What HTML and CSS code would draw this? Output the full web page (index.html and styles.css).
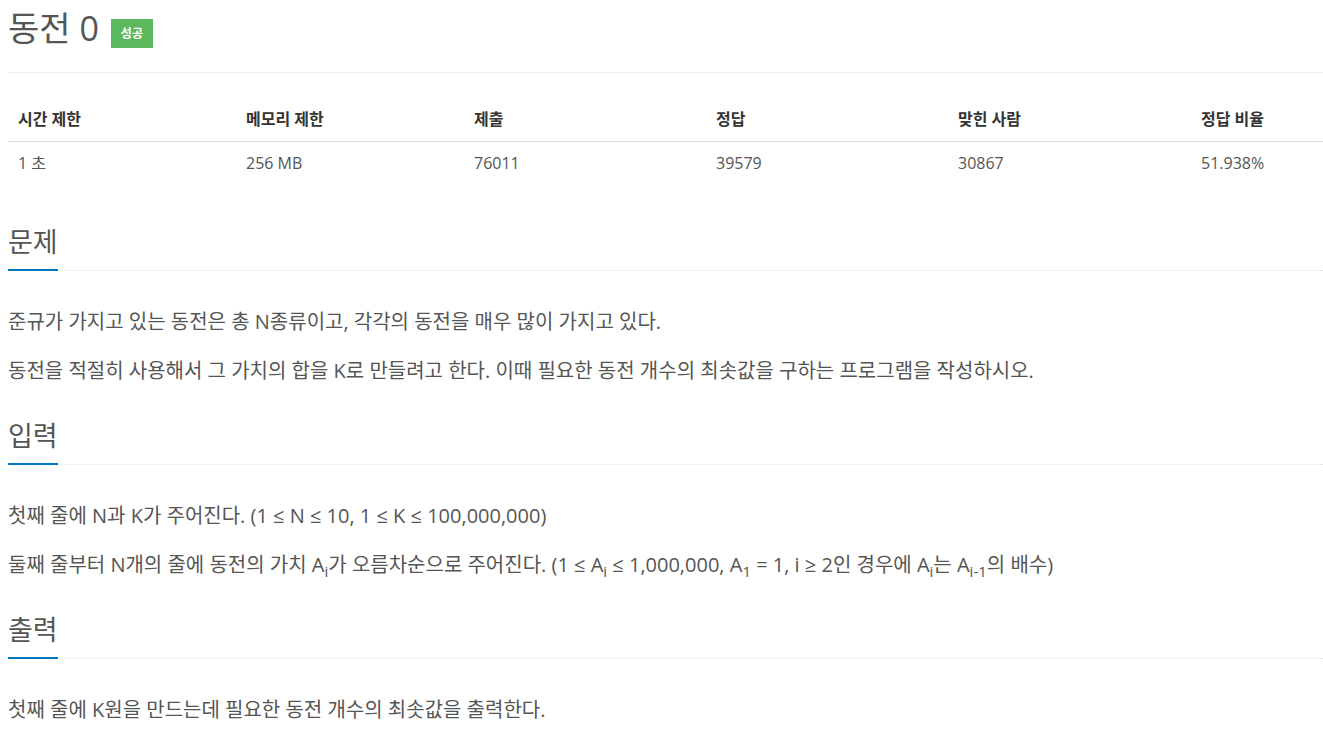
FILE: index.html
```html
<!DOCTYPE html>
<html lang="ko">
<head>
<meta charset="utf-8">
<title>동전 0</title>
<link rel="stylesheet" href="styles.css">
</head>
<body>
<div class="page">
  <div class="page-header">
    <h1 class="title">동전 0</h1>
    <span class="badge">성공</span>
  </div>

  <table class="info">
    <colgroup>
      <col class="c1"><col class="c2"><col class="c3"><col class="c4"><col class="c5"><col class="c6">
    </colgroup>
    <thead>
      <tr><th>시간 제한</th><th>메모리 제한</th><th>제출</th><th>정답</th><th>맞힌 사람</th><th>정답 비율</th></tr>
    </thead>
    <tbody>
      <tr><td>1 초</td><td>256 MB</td><td>76011</td><td>39579</td><td>30867</td><td>51.938%</td></tr>
    </tbody>
  </table>

  <section class="section">
    <div class="headline"><h2>문제</h2></div>
    <p>준규가 가지고 있는 동전은 총 N종류이고, 각각의 동전을 매우 많이 가지고 있다.</p>
    <p>동전을 적절히 사용해서 그 가치의 합을 K로 만들려고 한다. 이때 필요한 동전 개수의 최솟값을 구하는 프로그램을 작성하시오.</p>
  </section>

  <section class="section">
    <div class="headline"><h2>입력</h2></div>
    <p>첫째 줄에 N과 K가 주어진다. (1 ≤ N ≤ 10, 1 ≤ K ≤ 100,000,000)</p>
    <p>둘째 줄부터 N개의 줄에 동전의 가치 A<sub>i</sub>가 오름차순으로 주어진다. (1 ≤ A<sub>i</sub> ≤ 1,000,000, A<sub>1</sub> = 1, i ≥ 2인 경우에 A<sub>i</sub>는 A<sub>i-1</sub>의 배수)</p>
  </section>

  <section class="section">
    <div class="headline"><h2>출력</h2></div>
    <p>첫째 줄에 K원을 만드는데 필요한 동전 개수의 최솟값을 출력한다.</p>
  </section>
</div>
</body>
</html>
```

FILE: styles.css
```css
html, body {
  margin: 0;
  padding: 0;
  background: #fff;
}
body {
  font-family: "Open Sans", "Noto Sans CJK KR", sans-serif;
  color: #555;
}
.page {
  padding-left: 8px;
}
.page-header {
  display: flex;
  align-items: flex-start;
  gap: 12px;
  padding: 8px 0 24px;
  border-bottom: 1px solid #eee;
  margin-bottom: 24px;
}
.title {
  margin: 0;
  font-weight: 400;
  font-size: 34px;
  line-height: 40px;
  color: #555;
}
.badge {
  display: inline-block;
  background: #5cb85c;
  color: #fff;
  font-weight: 700;
  font-size: 12px;
  line-height: 29px;
  padding: 0 10px;
  margin-top: 11px;
}
.info {
  width: 100%;
  border-collapse: collapse;
  font-size: 16px;
  margin-bottom: 33px;
}
.info .c1, .info .c2 { width: 228px; }
.info .c3, .info .c4 { width: 242px; }
.info .c5 { width: 243px; }
.info th {
  text-align: left;
  font-weight: 700;
  color: #333;
  padding: 10px;
  line-height: 24px;
  border-bottom: 1px solid #ddd;
}
.info td {
  padding: 9px 10px 11px;
  line-height: 24px;
  color: #555;
}
.section {
  margin-top: 27px;
}
.headline {
  border-bottom: 1px dotted #e4e4e4;
  margin-bottom: 36px;
}
.headline h2 {
  display: inline-block;
  margin: 0 0 -1px;
  font-size: 27px;
  font-weight: 400;
  line-height: 36px;
  padding: 5px 0 9px;
  color: #555;
  border-bottom: 2px solid #0076c0;
}
.section p {
  margin: 0 0 19px;
  font-size: 20px;
  line-height: 30px;
  color: #555;
}
sub {
  font-size: 75%;
  line-height: 0;
  position: relative;
  vertical-align: baseline;
  bottom: -0.3em;
}
```
